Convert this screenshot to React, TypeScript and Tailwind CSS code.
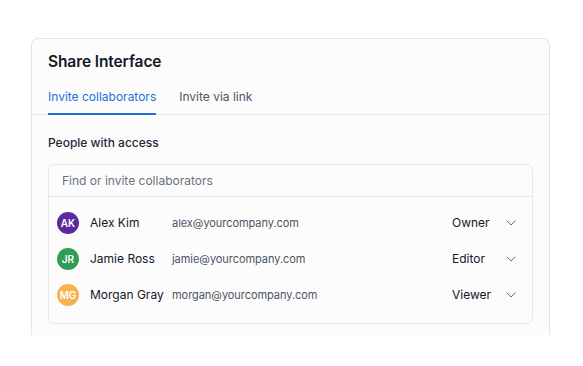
import { ChevronDown } from "lucide-react";

const people = [
    { initials: "AK", name: "Alex Kim", email: "alex@yourcompany.com", role: "Owner", color: "bg-[#5b2aa0]" },
    { initials: "JR", name: "Jamie Ross", email: "jamie@yourcompany.com", role: "Editor", color: "bg-[#2f9d52]" },
    { initials: "MG", name: "Morgan Gray", email: "morgan@yourcompany.com", role: "Viewer", color: "bg-[#f6b24f]" },
];

export default function App() {
    return (
        <div className="w-[583px] h-[366px] bg-white pt-[38px] pl-[31px] font-['Inter','Liberation_Sans',sans-serif] antialiased">
            <div className="w-[519px] h-[297px] overflow-hidden rounded-t-[7px] border border-b-0 border-[#e3e5ea] bg-[#fcfcfd]">
                {/* Header */}
                <div className="px-4 pt-[13px]">
                    <h1 className="text-[15.5px] leading-5 font-semibold text-[#111827] tracking-[-0.1px]">
                        Share Interface
                    </h1>
                </div>

                {/* Tabs */}
                <div className="mt-[10px] flex gap-[23px] px-4 border-b border-[#e5e7eb]">
                    <div className="relative pt-[6px] pb-[8px] text-[12px] leading-[18px] text-[#1f6fd9]">
                        Invite collaborators
                        <div className="absolute left-0 right-0 -bottom-px h-[2px] bg-[#1f6fd9]" />
                    </div>
                    <div className="pt-[6px] pb-[8px] text-[12px] leading-[18px] text-[#4b5563]">
                        Invite via link
                    </div>
                </div>

                {/* Body */}
                <div className="px-4 pt-[19px]">
                    <p className="text-[12px] leading-[18px] font-medium text-[#1f2937]">People with access</p>

                    <div className="mt-[12px] rounded-[6px] border border-[#e5e7eb] bg-[#fcfcfd]">
                        <div className="h-[32px] flex items-center px-[13px] border-b border-[#e5e7eb] text-[12px] text-[#6b7280]">
                            Find or invite collaborators
                        </div>
                        <div className="pt-[8px] pb-[10px]">
                            {people.map((p) => (
                                <div key={p.initials} className="h-[36px] flex items-center pl-[8px] pr-[13px]">
                                    <div
                                        className={`w-[22px] h-[22px] rounded-full ${p.color} flex items-center justify-center text-white text-[10px] font-semibold`}
                                    >
                                        {p.initials}
                                    </div>
                                    <span className="ml-[11px] w-[82px] text-[12px] text-[#111827]">{p.name}</span>
                                    <span className="text-[11px] tracking-[-0.05px] text-[#4b5563]">{p.email}</span>
                                    <span className="ml-auto w-[51px] text-[12px] text-[#111827]">{p.role}</span>
                                    <ChevronDown className="text-[#6b7280]" size={16} strokeWidth={1.5} />
                                </div>
                            ))}
                        </div>
                    </div>
                </div>
            </div>
        </div>
    );
}
